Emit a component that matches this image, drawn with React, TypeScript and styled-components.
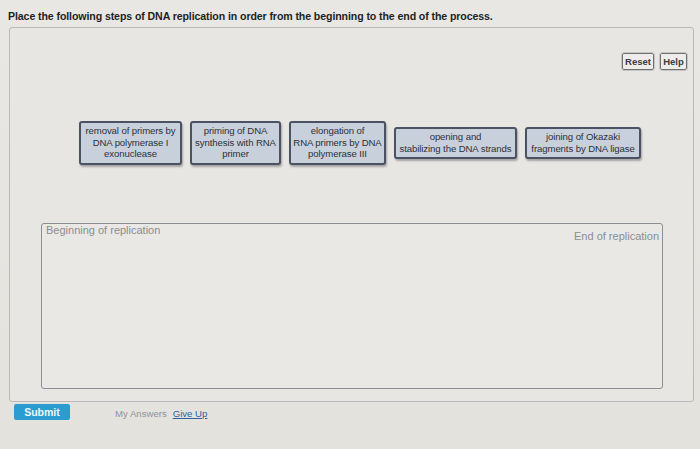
import styled, { createGlobalStyle } from "styled-components";

const GlobalStyle = createGlobalStyle`
  html, body {
    margin: 0;
    padding: 0;
    background: #e6e4df;
    font-family: "Liberation Sans", Arial, sans-serif;
    color: #2b2d33;
  }
`;

const Page = styled.div`
  width: 700px;
  height: 449px;
  overflow: hidden;
  background: linear-gradient(180deg, #e9e7e3 0%, #e4e2dd 100%);
`;

const Title = styled.h1`
  margin: 0;
  padding: 10px 0 0 8px;
  height: 17px;
  font-size: 10.6px;
  font-weight: 700;
  letter-spacing: -0.1px;
  color: #1e1f24;
`;

const Panel = styled.section`
  margin-left: 9px;
  width: 685px;
  height: 375px;
  box-sizing: border-box;
  border: 1px solid #b9b9b7;
  border-radius: 3px;
  background: #e8e6e2;
  padding: 25px 6px 0 31px;
  display: flex;
  flex-direction: column;
`;

const Toolbar = styled.div`
  display: flex;
  justify-content: flex-end;
  gap: 6px;
  height: 17px;
`;

const ToolButton = styled.button<{ $w: number }>`
  height: 17px;
  width: ${(p) => p.$w}px;
  padding: 0;
  box-sizing: border-box;
  border: 1px solid #6f7177;
  outline: 1px solid #c4c4c2;
  border-radius: 2px;
  background: #eeedea;
  font-family: "Liberation Sans", Arial, sans-serif;
  font-size: 9.5px;
  font-weight: 700;
  color: #3a3c44;
`;

const TileRow = styled.div`
  margin: 49px 0 0 38px;
  display: flex;
  align-items: center;
  gap: 8px;
  height: 48px;
`;

const Tile = styled.div<{ $w: number }>`
  width: ${(p) => p.$w}px;
  box-sizing: border-box;
  padding: 2px 1px 3px;
  border: 2px solid #4b5262;
  border-radius: 3px;
  background: #c8d0dc;
  box-shadow: 1px 2px 2px rgba(40, 44, 55, 0.35);
  text-align: center;
  font-size: 9.6px;
  line-height: 11.5px;
  letter-spacing: -0.1px;
  color: #2c3039;
  white-space: nowrap;
`;

const DropZone = styled.div`
  margin-top: 56px;
  width: 622px;
  height: 166px;
  box-sizing: border-box;
  border: 1.5px solid #8c8e96;
  border-radius: 3px;
  background: #e9e8e4;
  padding: 0 3px 0 4px;
  display: flex;
  justify-content: space-between;
  align-items: flex-start;
`;

const ZoneLabel = styled.span<{ $top: number }>`
  margin-top: ${(p) => p.$top}px;
  font-size: 11px;
  color: #8b8d93;
`;

const Footer = styled.div`
  display: flex;
  align-items: center;
  padding: 2px 0 0 14px;
  gap: 45px;
`;

const SubmitButton = styled.button`
  width: 56px;
  height: 16px;
  border: 0;
  border-radius: 2px;
  background: #2a9ccf;
  color: #eef7fb;
  font-family: "Liberation Sans", Arial, sans-serif;
  font-size: 10.5px;
  font-weight: 700;
  padding: 0;
`;

const Links = styled.div`
  display: flex;
  gap: 6px;
  padding-top: 2px;
  font-size: 9.6px;
`;

const Muted = styled.span`
  color: #8d929c;
`;

const GiveUp = styled.a`
  color: #2e5f9e;
  text-decoration: underline;
`;

const tiles = [
  { w: 103, lines: ["removal of primers by", "DNA polymerase I", "exonuclease"] },
  { w: 91, lines: ["priming of DNA", "synthesis with RNA", "primer"] },
  { w: 97, lines: ["elongation of", "RNA primers by DNA", "polymerase III"] },
  { w: 123, lines: ["opening and", "stabilizing the DNA strands"] },
  { w: 116, lines: ["joining of Okazaki", "fragments by DNA ligase"] },
];

export default function App() {
  return (
    <Page>
      <GlobalStyle />
      <Title>
        Place the following steps of DNA replication in order from the beginning to the end of the process.
      </Title>
      <Panel>
        <Toolbar>
          <ToolButton $w={32}>Reset</ToolButton>
          <ToolButton $w={27}>Help</ToolButton>
        </Toolbar>
        <TileRow>
          {tiles.map((t) => (
            <Tile key={t.lines[0]} $w={t.w}>
              {t.lines.map((l) => (
                <div key={l}>{l}</div>
              ))}
            </Tile>
          ))}
        </TileRow>
        <DropZone>
          <ZoneLabel $top={0}>Beginning of replication</ZoneLabel>
          <ZoneLabel $top={6}>End of replication</ZoneLabel>
        </DropZone>
      </Panel>
      <Footer>
        <SubmitButton>Submit</SubmitButton>
        <Links>
          <Muted>My Answers</Muted>
          <GiveUp href="#">Give Up</GiveUp>
        </Links>
      </Footer>
    </Page>
  );
}
